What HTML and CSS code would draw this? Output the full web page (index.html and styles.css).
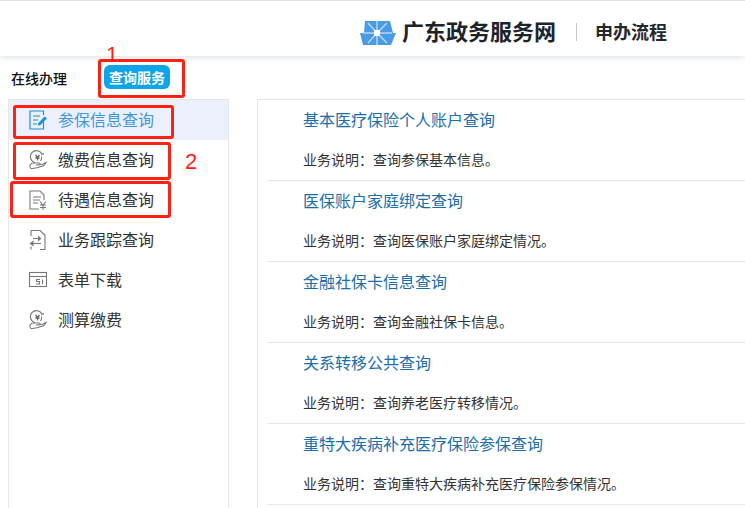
FILE: index.html
```html
<!DOCTYPE html>
<html lang="zh-CN">
<head>
<meta charset="utf-8">
<title>广东政务服务网 申办流程</title>
<link rel="stylesheet" href="styles.css">
</head>
<body>
<header class="header">
  <svg class="logo" width="36" height="24" viewBox="0 0 36 24">
    <path d="M5 0H30L33 12H4Z" fill="#4a9be4"/>
    <path d="M0 12H36L31 24H3Z" fill="#4a9be4"/>
    <path d="M17 12L8 2M17 12L27 2M17 12L8 22M17 12L27 22M17 0V24M3 12H32" stroke="#b5d8f5" stroke-width="1.5"/>
    <rect x="14" y="9" width="6" height="6" fill="#fff"/>
  </svg>
  <h1 class="site-name">广东政务服务网</h1>
  <span class="divider"></span>
  <span class="page-name">申办流程</span>
</header>

<div class="subbar">
  <span class="subbar-label">在线办理</span>
  <span class="badge">查询服务</span>
</div>

<main class="main">
  <nav class="side">
    <a class="side-item active">
      <svg class="ico" width="20" height="20" viewBox="0 0 20 20" fill="none" stroke="#1f8fd8" stroke-width="1.2">
        <path d="M15.5 5V1H2V19H15.5V12"/>
        <path d="M5 6H12M5 10H10M5 14H9"/>
        <path d="M10 13.5L16.5 6.5L19 8.5L12.5 15L10 15.5Z" fill="#1f8fd8" stroke="none"/>
      </svg>
      <span>参保信息查询</span>
    </a>
    <a class="side-item">
      <svg class="ico" width="20" height="20" viewBox="0 0 20 20" fill="none" stroke="#777" stroke-width="1.1">
        <path d="M16 3.5L14 4.5A6 6 0 1 0 7 12.5"/>
        <path d="M13.5 6.5A6 6 0 0 1 12.5 11"/>
        <path d="M7.5 5L9.5 7.5L11.5 5M7.5 8H11.500M9.500 7.500V10.500" stroke="#666" stroke-width="1.3"/>
        <path d="M2.500 18C1 16 2 13.500 5 13H11C12.500 13 12.500 15 11 15H8L14 14.500L18 12.500L16 15.500L10 17.500L5 18.500H2.500"/>
      </svg>
      <span>缴费信息查询</span>
    </a>
    <a class="side-item">
      <svg class="ico" width="20" height="20" viewBox="0 0 20 20" fill="none" stroke="#777" stroke-width="1.1">
        <path d="M11 19H2V1H12L16 5V10"/>
        <path d="M5 7H13M5 10H12M5 13H10"/>
        <path d="M12 11.500L15 15L18 11.500M12 15H18M12 17.500H18M15 15V20"/>
      </svg>
      <span>待遇信息查询</span>
    </a>
    <a class="side-item">
      <svg class="ico" width="20" height="20" viewBox="0 0 20 20" fill="none" stroke="#777" stroke-width="1.1">
        <path d="M3 6V0.500H12L17 5V19.500H12"/>
        <path d="M5 8.500H12"/>
        <path d="M10 5.500L13.500 8.500L10 11.500Z" fill="#777" stroke="none"/>
        <path d="M13 13.500H4"/>
        <path d="M5.500 10.500L1.500 13.500L5.500 16.500Z" fill="#777" stroke="none"/>
        <path d="M3 16.500V19.500"/>
      </svg>
      <span>业务跟踪查询</span>
    </a>
    <a class="side-item">
      <svg class="ico" width="20" height="20" viewBox="0 0 20 20" fill="none" stroke="#777" stroke-width="1.1">
        <rect x="1.500" y="2.500" width="17" height="14"/>
        <path d="M1.500 6.500H18.500"/>
        <path d="M12 9.500H8.500V11.500H11.500V14H8M14.500 9.500V14"/>
      </svg>
      <span>表单下载</span>
    </a>
    <a class="side-item">
      <svg class="ico" width="20" height="20" viewBox="0 0 20 20" fill="none" stroke="#777" stroke-width="1.1">
        <path d="M16 3.5L14 4.5A6 6 0 1 0 7 12.5"/>
        <path d="M13.5 6.5A6 6 0 0 1 12.5 11"/>
        <path d="M7.5 5L9.5 7.5L11.5 5M7.5 8H11.500M9.500 7.500V10.500" stroke="#666" stroke-width="1.3"/>
        <path d="M2.500 18C1 16 2 13.500 5 13H11C12.500 13 12.500 15 11 15H8L14 14.500L18 12.500L16 15.500L10 17.500L5 18.500H2.500"/>
      </svg>
      <span>测算缴费</span>
    </a>
  </nav>

  <section class="panel">
    <article class="row">
      <a class="row-title">基本医疗保险个人账户查询</a>
      <p class="row-desc">业务说明：查询参保基本信息。</p>
    </article>
    <article class="row">
      <a class="row-title">医保账户家庭绑定查询</a>
      <p class="row-desc">业务说明：查询医保账户家庭绑定情况。</p>
    </article>
    <article class="row">
      <a class="row-title">金融社保卡信息查询</a>
      <p class="row-desc">业务说明：查询金融社保卡信息。</p>
    </article>
    <article class="row">
      <a class="row-title">关系转移公共查询</a>
      <p class="row-desc">业务说明：查询养老医疗转移情况。</p>
    </article>
    <article class="row">
      <a class="row-title">重特大疾病补充医疗保险参保查询</a>
      <p class="row-desc">业务说明：查询重特大疾病补充医疗保险参保情况。</p>
    </article>
  </section>
</main>

<div class="mark mark-badge"></div>
<div class="mark mark-one"></div>
<div class="mark mark-two"></div>
<div class="mark mark-three"></div>
<span class="mark-num num-one">1</span>
<span class="mark-num num-two">2</span>
</body>
</html>
```

FILE: styles.css
```css
* { box-sizing: border-box; }
html, body {
  margin: 0;
  height: 508px;
  overflow: hidden;
  background: #fff;
  font-family: "Noto Sans CJK SC", "Noto Sans", sans-serif;
  color: #333;
}
.header {
  height: 56px;
  border-top: 1px solid #dfe0e4;
  display: flex;
  align-items: center;
  padding: 2px 0 0 360px;
  background: #fff;
  box-shadow: 0 2px 6px rgba(120, 130, 150, 0.22);
  position: relative;
}
.logo { flex: none; margin-top: 6px; }
.site-name {
  margin: 0 0 0 6px;
  font-size: 22px;
  font-weight: 700;
  line-height: 30px;
  color: #1d2329;
}
.divider {
  width: 1px;
  height: 18px;
  background: #c4c6ca;
  margin: 5px 18px 0 20px;
}
.page-name {
  margin-top: 2px;
  font-size: 18px;
  font-weight: 700;
  line-height: 24px;
  color: #23282e;
}
.subbar {
  height: 43px;
  display: flex;
  align-items: center;
  padding: 0 0 0 11px;
}
.subbar-label {
  font-size: 14px;
  font-weight: 500;
  line-height: 20px;
  color: #111;
}
.badge {
  margin-left: 37px;
  margin-top: -1px;
  width: 66px;
  height: 24px;
  border-radius: 6px;
  background: #0ea4e9;
  color: #fff;
  font-size: 14px;
  font-weight: 700;
  line-height: 24px;
  text-align: center;
}
.main {
  display: grid;
  grid-template-columns: 221px 1fr;
  column-gap: 28px;
  padding-left: 8px;
}
.side {
  height: 420px;
  border: 1px solid #e6e6e6;
  border-bottom: 0;
}
.side-item {
  height: 40px;
  display: flex;
  align-items: center;
  padding-left: 19px;
  gap: 10px;
  font-size: 16px;
  color: #333;
}
.side-item span { margin-bottom: 2px; }
.side-item.active {
  background: #ecf0fc;
  color: #3f97dc;
}
.ico { flex: none; }
.panel {
  height: 420px;
  width: 500px;
  border: 1px solid #e6e6e6;
  border-width: 1px 0 0 1px;
  padding-left: 10px;
}
.row {
  height: 81px;
  border-bottom: 1px solid #e6e6e6;
  padding-left: 35px;
}
.row-title {
  display: block;
  height: 40px;
  font-size: 16px;
  line-height: 38px;
  color: #1a6ea8;
}
.row-desc {
  margin: 0;
  height: 40px;
  font-size: 14px;
  line-height: 38px;
  color: #333;
}
.mark {
  position: absolute;
  border: 3px solid #ff2114;
  border-radius: 3px;
}
.mark-badge { left: 98px; top: 59px; width: 87px; height: 39px; }
.mark-one { left: 13px; top: 105px; width: 161px; height: 34px; }
.mark-two { left: 13px; top: 142px; width: 158px; height: 38px; }
.mark-three { left: 10px; top: 181px; width: 161px; height: 37px; }
.mark-num {
  position: absolute;
  font-family: "Liberation Sans", sans-serif;
  font-size: 22px;
  line-height: 22px;
  color: #ff2114;
}
.num-one { left: 106px; top: 44px; }
.num-two { left: 185px; top: 151px; }
```
